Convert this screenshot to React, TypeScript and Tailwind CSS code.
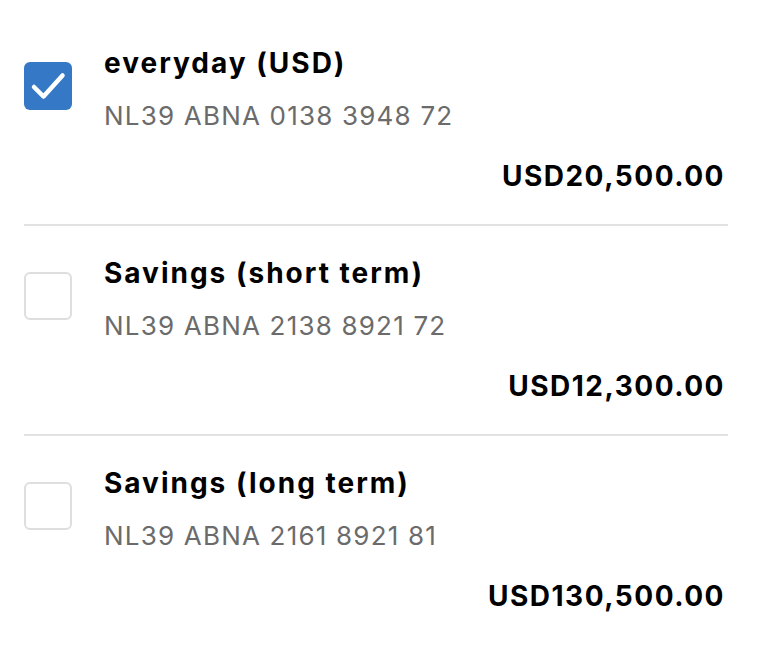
const accounts = [
  { name: 'everyday (USD)', iban: 'NL39 ABNA 0138 3948 72', amount: 'USD20,500.00', checked: true },
  { name: 'Savings (short term)', iban: 'NL39 ABNA 2138 8921 72', amount: 'USD12,300.00', checked: false },
  { name: 'Savings (long term)', iban: 'NL39 ABNA 2161 8921 81', amount: 'USD130,500.00', checked: false },
];

function Checkbox({ checked }: { checked: boolean }) {
  if (checked) {
    return (
      <div className="w-12 h-12 rounded-[6px] bg-[#3478c6] flex items-center justify-center flex-shrink-0">
        <svg viewBox="0 0 48 48" className="w-12 h-12">
          <path d="M10 25 L19.5 34.5 L38.5 13.5" fill="none" stroke="white" strokeWidth="4.5" strokeLinecap="round" strokeLinejoin="round" />
        </svg>
      </div>
    );
  }
  return <div className="w-12 h-12 rounded-[6px] border-2 border-[#dedede] bg-white flex-shrink-0" />;
}

export default function App() {
  return (
    <div className="min-h-screen bg-white pt-4 pl-6 pr-[34px] font-['Inter',sans-serif]">
      {accounts.map((a, i) => (
        <div key={a.iban} className={i > 0 ? 'border-t-2 border-[#e2e2e2]' : ''}>
          <div className="pt-[29px] pb-[30px]">
            <div className="flex gap-8">
              <div className="pt-[17px]">
                <Checkbox checked={a.checked} />
              </div>
              <div>
                <div className="text-[28px] leading-9 font-bold text-black tracking-[2px]">{a.name}</div>
                <div className="mt-[17px] text-[26px] leading-9 text-[#6b6b6b] tracking-[1.2px]">{a.iban}</div>
              </div>
            </div>
            <div className="mt-6 mr-[3px] text-right text-[28px] leading-9 font-bold text-black tracking-[1.5px]">{a.amount}</div>
          </div>
        </div>
      ))}
    </div>
  );
}
